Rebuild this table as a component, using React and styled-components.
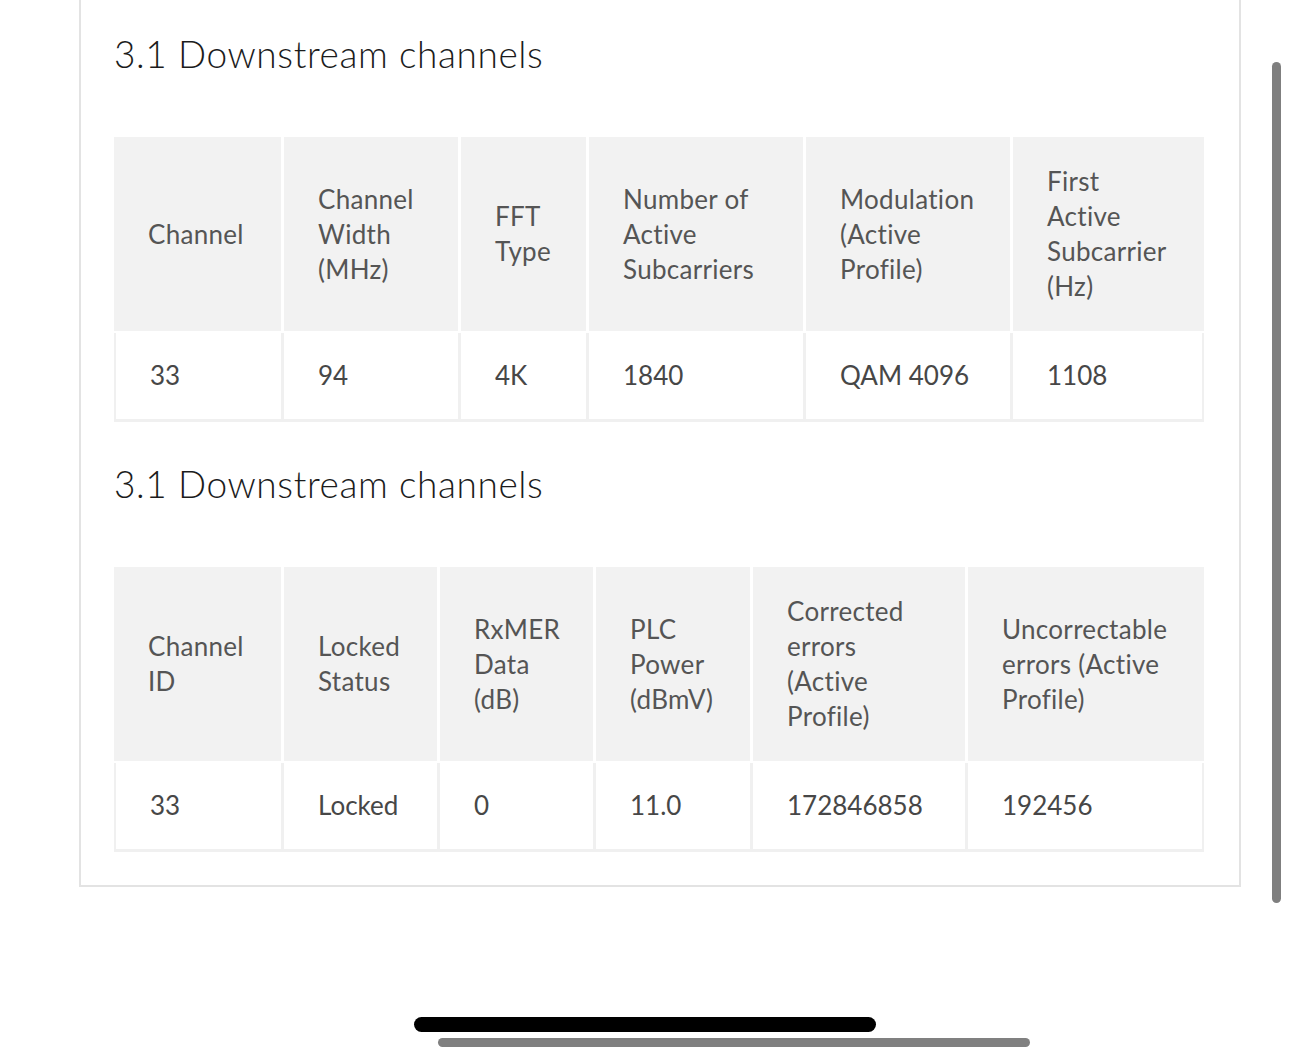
import React from "react";
import styled, { createGlobalStyle } from "styled-components";

const Global = createGlobalStyle`
  html, body { margin: 0; padding: 0; background: #fff; }
  body { font-family: Lato, "Open Sans", sans-serif; }
`;

const Page = styled.div`
  position: relative;
  width: 1290px;
  height: 1056px;
  overflow: hidden;
  background: #fff;
`;

const Card = styled.section`
  box-sizing: border-box;
  margin-left: 79px;
  width: 1162px;
  border: 2px solid #e3e3e3;
  border-top: none;
  padding: 32px 35px 33px 33px;
  display: flex;
  flex-direction: column;
`;

const Heading = styled.h2`
  margin: ${(p) => (p.$first ? "0" : "40px")} 0 61px 0;
  font-size: 37px;
  line-height: 44px;
  font-weight: 300;
  color: #1c1c1c;
  letter-spacing: 0.6px;
`;

const Table = styled.table`
  width: 1090px;
  table-layout: fixed;
  border-collapse: separate;
  border-spacing: 0;
  font-size: 26px;
  line-height: 35px;
`;

const Th = styled.th`
  box-sizing: border-box;
  background: #f2f2f2;
  color: #555;
  font-weight: 400;
  text-align: left;
  vertical-align: middle;
  white-space: nowrap;
  letter-spacing: 0.3px;
  padding: 27px 10px 27px 34px;
  border-left: ${(p) => (p.$first ? 0 : 3)}px solid #fff;
  border-bottom: 2px solid #fff;
`;

const Td = styled.td`
  box-sizing: border-box;
  background: #fff;
  color: #474747;
  text-align: left;
  vertical-align: middle;
  white-space: nowrap;
  padding: 25px 10px 26px 34px;
  border-left: ${(p) => (p.$first ? 2 : 3)}px solid #f0f0f0;
  border-right: ${(p) => (p.$last ? 2 : 0)}px solid #f0f0f0;
  border-bottom: 3px solid #f0f0f0;
`;

const ScrollV = styled.div`
  position: absolute;
  left: 1272px;
  top: 62px;
  width: 9px;
  height: 841px;
  border-radius: 5px;
  background: #7f7f7f;
`;

const HomeBar = styled.div`
  position: absolute;
  left: 414px;
  top: 1017px;
  width: 462px;
  height: 15px;
  border-radius: 8px;
  background: #000;
`;

const ScrollH = styled.div`
  position: absolute;
  left: 438px;
  top: 1038px;
  width: 592px;
  height: 9px;
  border-radius: 5px;
  background: #808080;
`;

const tables = [
  {
    widths: [167, 177, 128, 217, 207, 194],
    headers: [
      ["Channel"],
      ["Channel", "Width", "(MHz)"],
      ["FFT", "Type"],
      ["Number of", "Active", "Subcarriers"],
      ["Modulation", "(Active", "Profile)"],
      ["First", "Active", "Subcarrier", "(Hz)"],
    ],
    row: ["33", "94", "4K", "1840", "QAM 4096", "1108"],
  },
  {
    widths: [167, 156, 156, 157, 215, 239],
    headers: [
      ["Channel", "ID"],
      ["Locked", "Status"],
      ["RxMER", "Data", "(dB)"],
      ["PLC", "Power", "(dBmV)"],
      ["Corrected", "errors", "(Active", "Profile)"],
      ["Uncorrectable", "errors (Active", "Profile)"],
    ],
    row: ["33", "Locked", "0", "11.0", "172846858", "192456"],
  },
];

function Lines({ lines }) {
  return lines.map((l, i) => (
    <React.Fragment key={i}>
      {i > 0 && <br />}
      {l}
    </React.Fragment>
  ));
}

function ChannelTable({ widths, headers, row }) {
  const n = headers.length;
  return (
    <Table>
      <colgroup>
        {widths.map((w, i) => (
          <col key={i} style={{ width: w }} />
        ))}
      </colgroup>
      <thead>
        <tr>
          {headers.map((h, i) => (
            <Th key={i} $first={i === 0}>
              <Lines lines={h} />
            </Th>
          ))}
        </tr>
      </thead>
      <tbody>
        <tr>
          {row.map((v, i) => (
            <Td key={i} $first={i === 0} $last={i === n - 1}>
              {v}
            </Td>
          ))}
        </tr>
      </tbody>
    </Table>
  );
}

export default function App() {
  return (
    <Page>
      <Global />
      <Card>
        {tables.map((t, i) => (
          <React.Fragment key={i}>
            <Heading $first={i === 0}>3.1 Downstream channels</Heading>
            <ChannelTable {...t} />
          </React.Fragment>
        ))}
      </Card>
      <ScrollV />
      <HomeBar />
      <ScrollH />
    </Page>
  );
}
